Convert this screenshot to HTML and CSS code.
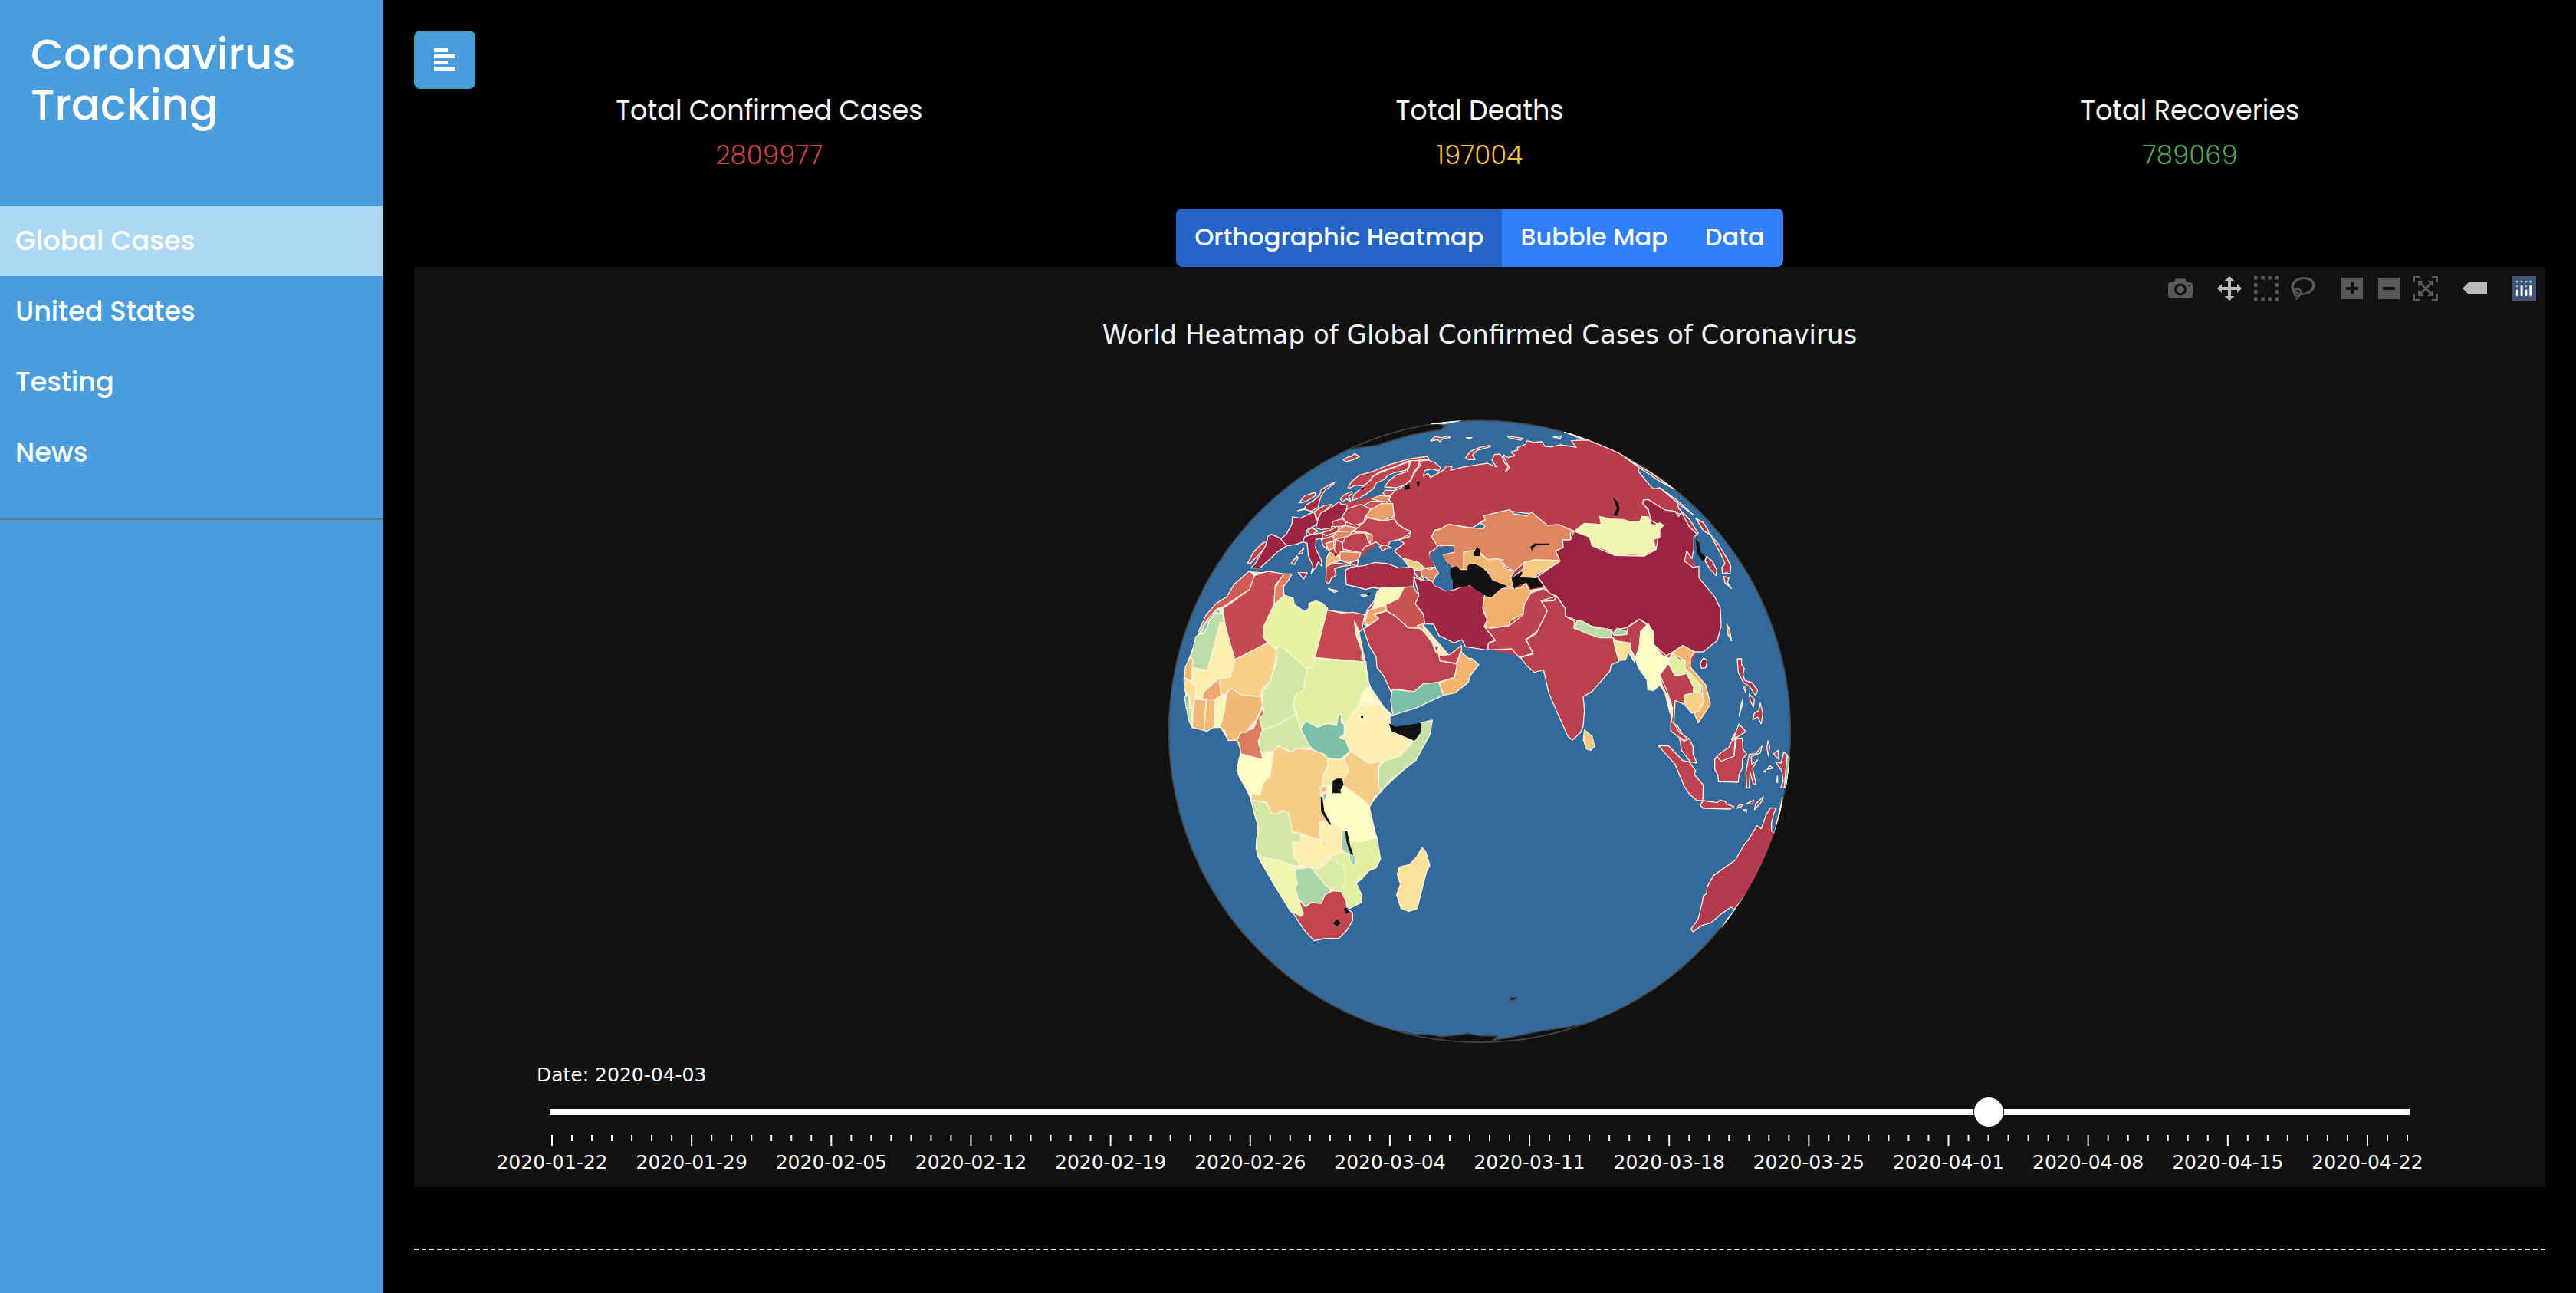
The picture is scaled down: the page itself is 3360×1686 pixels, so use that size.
FILE: index.html
```html
<!DOCTYPE html>
<html lang="en">
<head>
<meta charset="utf-8">
<title>Coronavirus Tracking</title>
<link rel="stylesheet" href="styles.css">
</head>
<body>
<aside class="sidebar">
  <h1 class="brand">Coronavirus Tracking</h1>
  <nav class="nav">
    <a class="nav-link active" href="#global">Global Cases</a>
    <a class="nav-link" href="#us">United States</a>
    <a class="nav-link" href="#testing">Testing</a>
    <a class="nav-link" href="#news">News</a>
  </nav>
</aside>
<main class="content">
  <button class="toggle" type="button" aria-label="Toggle sidebar">
    <svg width="28" height="30" viewBox="0 0 28 30"><path fill="#fff" d="M1 0h16q1 0 1 1v3q0 1-1 1H1q-1 0-1-1V1q0-1 1-1zM1 8h26q1 0 1 1v3q0 1-1 1H1q-1 0-1-1V9q0-1 1-1zM1 16h16q1 0 1 1v3q0 1-1 1H1q-1 0-1-1v-3q0-1 1-1zM1 24h26q1 0 1 1v3q0 1-1 1H1q-1 0-1-1v-3q0-1 1-1z"/></svg>
  </button>
  <section class="totals">
    <div class="total"><h2>Total Confirmed Cases</h2><p class="confirmed">2809977</p></div>
    <div class="total"><h2>Total Deaths</h2><p class="deaths">197004</p></div>
    <div class="total"><h2>Total Recoveries</h2><p class="recovered">789069</p></div>
  </section>
  <div class="tabs">
    <button class="tab active" type="button">Orthographic Heatmap</button>
    <button class="tab" type="button">Bubble Map</button>
    <button class="tab" type="button">Data</button>
  </div>
  <section class="chart">
    <div class="modebar">
      <div class="mode-group">
        <button type="button" aria-label="Download plot"><svg viewBox="0 0 1000 1000"><path transform="matrix(1 0 0 -1 0 850)" d="m500 450c-83 0-150-67-150-150 0-83 67-150 150-150 83 0 150 67 150 150 0 83-67 150-150 150z m400 150h-120c-16 0-34 13-39 29l-31 93c-6 15-23 28-40 28h-340c-16 0-34-13-39-28l-31-94c-6-15-23-28-40-28h-120c-55 0-100-45-100-100v-450c0-55 45-100 100-100h800c55 0 100 45 100 100v450c0 55-45 100-100 100z m-400-550c-138 0-250 112-250 250 0 138 112 250 250 250 138 0 250-112 250-250 0-138-112-250-250-250z m365 380c-19 0-35 16-35 35 0 19 16 35 35 35 19 0 35-16 35-35 0-19-16-35-35-35z"/></svg></button>
      </div>
      <div class="mode-group">
        <button class="on" type="button" aria-label="Pan"><svg viewBox="0 0 1000 1000"><path transform="matrix(1 0 0 -1 0 850)" d="m1000 350l-187 188 0-125-250 0 0 250 125 0-188 187-187-187 125 0 0-250-250 0 0 125-188-188 186-187 0 125 252 0 0-250-125 0 187-188 188 188-125 0 0 250 250 0 0-126 187 188z"/></svg></button>
        <button type="button" aria-label="Box select"><svg viewBox="0 0 1000 1000"><path d="M0 0h143v143H0zM286 0h143v143H286zM571 0h143v143H571zM857 0h143v143H857zM0 286h143v143H0zM857 286h143v143H857zM0 571h143v143H0zM857 571h143v143H857zM0 857h143v143H0zM286 857h143v143H286zM571 857h143v143H571zM857 857h143v143H857z"/></svg></button>
        <button type="button" aria-label="Lasso select"><svg viewBox="0 0 1031 1000"><path transform="matrix(1 0 0 -1 0 850)" d="m1018 538c-36 207-290 336-568 286-277-48-473-256-436-463 10-57 36-108 76-151-13-66 11-137 68-183 34-28 75-41 114-42l-55-70 0 0c-2-1-3-2-4-3-10-14-8-34 5-45 14-11 34-8 45 4 1 1 2 3 2 5l0 0 113 140c16 11 31 24 45 40 4 3 6 7 8 11 48-3 100 0 151 9 278 48 473 255 436 462z m-624-379c-80 14-149 48-197 96 42 42 109 47 156 9 33-26 47-66 41-105z m-187-74c-19 16-33 37-39 60 50-32 109-55 174-68-42-25-95-24-135 8z m360 75c-34-7-69-9-102-8 8 62-16 128-68 170-73 59-175 54-244-5-9 20-16 40-20 61-28 159 121 317 333 354s407-60 434-217c28-159-121-318-333-355z"/></svg></button>
      </div>
      <div class="mode-group">
        <button type="button" aria-label="Zoom in"><svg viewBox="0 0 875 1000"><path transform="matrix(1 0 0 -1 0 850)" d="m1 787l0-875 875 0 0 875-875 0z m687-500l-187 0 0-187-125 0 0 187-188 0 0 125 188 0 0 187 125 0 0-187 187 0 0-125z"/></svg></button>
        <button type="button" aria-label="Zoom out"><svg viewBox="0 0 875 1000"><path transform="matrix(1 0 0 -1 0 850)" d="m0 788l0-876 876 0 0 876-876 0z m688-500l-500 0 0 125 500 0 0-125z"/></svg></button>
        <button type="button" aria-label="Reset"><svg viewBox="0 0 1000 1000"><path transform="matrix(1 0 0 -1 0 850)" d="m250 850l-187 0-63 0 0-62 0-188 63 0 0 188 187 0 0 62z m688 0l-188 0 0-62 188 0 0-188 62 0 0 188 0 62-62 0z m-875-938l0 188-63 0 0-188 0-62 63 0 187 0 0 62-187 0z m875 188l0-188-188 0 0-62 188 0 62 0 0 62 0 188-62 0z m-125 188l-1 0-93-94-156 156 156 156 92-93 2 0 0 250-250 0 0-2 93-92-156-156-156 156 94 92 0 2-250 0 0-250 0 0 93 93 157-156-157-156-93 94 0 0 0-250 250 0 0 0-94 93 156 157 156-157-93-93 0 0 250 0 0 250z"/></svg></button>
      </div>
      <div class="mode-group">
        <button class="on" type="button" aria-label="Toggle hover labels"><svg viewBox="0 0 1500 1000"><path transform="matrix(1 0 0 -1 0 850)" d="m375 725l0 0-375-375 375-374 0-1 1125 0 0 750-1125 0z"/></svg></button>
      </div>
      <div class="mode-group">
        <a href="#plotly" aria-label="Produced with Plotly"><svg viewBox="0 0 132 132"><rect width="132" height="132" rx="6" fill="#435375"/><g fill="#80cfbe"><circle cx="78" cy="54" r="6"/><circle cx="102" cy="30" r="6"/><circle cx="78" cy="30" r="6"/><circle cx="54" cy="30" r="6"/><circle cx="30" cy="30" r="6"/><circle cx="30" cy="54" r="6"/></g><path fill="none" stroke="#fff" stroke-width="12" stroke-linecap="round" d="M30 78v24M54 54v48M78 78v24M102 54v48"/></svg></a>
      </div>
    </div>
    <h3 class="chart-title">World Heatmap of Global Confirmed Cases of Coronavirus</h3>
    <svg class="globe" viewBox="0 0 2520 2520" role="img" aria-label="Globe coloured by confirmed cases">
      <defs><clipPath id="disc"><circle cx="1260" cy="1271" r="1219"/></clipPath></defs>
      <circle cx="1260" cy="1271" r="1217" fill="#346a9b"/>
      <g clip-path="url(#disc)">
      <!-- polar land without data -->
      <g class="nodata">
        <path d="M730 174L850 115 980 75 1080 60 1125 78 1105 92 1060 98 990 112 900 138 860 152 780 162z"/>
        <path d="M940 2442L1010 2458 1060 2456 1110 2465 1180 2458 1215 2452 1250 2460 1265 2462 1330 2462 1315 2478 1380 2468 1490 2445 1600 2428 1670 2415 1600 2470 1260 2500 1000 2500z"/>
        <path d="M1380 2312L1405 2312 1398 2322 1380 2322z"/>
      </g>
      <circle class="rim" cx="1260" cy="1271" r="1217"/>
      <!-- cream base under the continents, seen only along the borders -->
      <g class="base">
        <path d="M160 885L270 745 360 645 495 655 460 775 495 740 575 803 660 795 805 812 790 882 815 1000 830 1090 910 1210 915 1270 1030 1275 1010 1380 875 1505 830 1565 858 1685 870 1770 800 1850 775 1870 798 1925 740 1965 763 1990 710 2080 612 2088 525 1975 392 1760 390 1640 365 1540 312 1425 325 1355 310 1305 275 1305 245 1258 140 1258 108 1130 108 1020z"/>
        <path d="M1000 640L1070 520 1230 475 1630 480 1900 420 2050 480 2095 600 2180 800 2130 900 2085 1020 2150 1170 2115 1225 2070 1140 2000 1160 1950 1060 1870 950 1780 900 1620 930 1560 900 1460 985 1290 950 1290 680 1170 640 1120 570 1090 560z" fill="#ba3f4f"/>
        <path d="M640 500L720 380 900 340 950 470 830 560 780 600 720 600 660 560z" fill="#bf4251"/>
        <path d="M858 720L1000 700 1045 860 1170 1005 1100 1080 935 1105 810 870z"/>
      </g>
      <g class="land">
      <!-- Russia -->
      <path fill="#b83c4e" d="M1060 210L1085 220 1108 240 1100 252 1075 245 1045 250 1040 272 1058 262 1068 278 1085 268 1120 248 1130 232 1152 236 1146 250 1190 238 1225 232 1265 226 1290 222 1325 236 1308 210 1318 188 1338 186 1350 200 1358 222 1372 235 1360 256 1378 240 1360 210 1352 188 1370 200 1398 192 1382 178 1410 170 1408 160 1440 148 1445 134 1470 140 1505 138 1515 156 1540 158 1575 150 1620 156 1638 160 1630 148 1618 134 1660 132 1685 132 1750 158 1810 185 1870 225 1885 240 1880 252 1910 290 1940 323 1965 318 2030 370 2040 400 2080 440 2115 495 2112 502 2080 470 2045 420 1985 410 1900 380 1930 420 1930 445 1820 470 1735 480 1630 488 1525 470 1463 420 1378 410 1275 445 1232 475 1140 462 1105 480 1085 484 1072 510 1095 545 1090 556 1065 570 1062 580 1075 600 1088 628 1045 632 1020 612 975 600 955 592 925 565 950 548 965 535 945 522 965 515 985 510 990 490 965 478 935 455 928 440 925 430 920 390 912 378 905 360 915 345 928 328 945 322 990 290 1005 260 1028 230 1022 215 1040 212z"/>
      <!-- Arctic islands and northern Europe -->
      <g fill="#bf4251">
        <path d="M1072 68L1120 62 1182 56 1130 66z"/><path d="M1068 135L1085 118 1110 122 1140 116 1145 122 1115 127 1105 138 1095 130z"/><path d="M1208 122L1230 122 1220 127z"/>
        <path d="M1205 200L1225 175 1260 160 1300 152 1302 157 1250 172 1232 190 1242 208 1215 207z"/>
        <path d="M726 208L745 198 760 195 770 184 790 196 765 208 738 216z"/>
        <path d="M745 318L758 295 790 268 840 255 900 230 985 205 1055 195 1062 208 1030 208 1000 215 985 212 930 235 870 255 840 275 825 300 800 310 775 308 755 318z"/>
        <path d="M760 368L768 345 790 325 810 308 830 292 845 272 880 255 935 235 985 215 980 240 970 250 930 258 900 270 888 285 855 300 845 320 820 340 790 358z"/>
        <path d="M888 315L905 290 935 268 975 255 985 235 990 212 1025 212 1020 235 1003 255 992 285 970 305 935 318z"/>
        <path d="M715 362L730 345 760 332 762 340 748 350 755 370 738 362 725 372z"/>
        <path d="M553 377L575 350 615 336 618 348 590 366 565 376z"/>
        <path d="M722 430L742 400 795 383 832 395 830 410 812 432 805 455 770 465 735 450z"/>
        <path d="M882 340L890 328 928 328 915 345 895 352z"/>
        <path d="M680 450L710 432 738 450 735 465 705 472 680 468z"/><path d="M582 485L605 475 628 488 600 502z"/><path d="M612 412L650 388 682 383 655 408 625 440z"/>
        <path d="M765 490L805 455 820 435 880 448 925 440 940 462 965 478 990 488 975 505 945 520 910 528 900 548 875 545 855 530 830 540 840 505 815 492z"/><path d="M868 548L890 542 915 552 895 555 880 565z"/>
        <path d="M722 540L735 510 775 495 815 495 825 530 835 540 812 548 800 565 775 568 725 558z"/>
        <path d="M692 560L695 520 720 530 728 565 712 585 700 575z"/><path d="M640 520L690 505 690 525 660 535 662 560 648 545z"/>
        <path d="M660 622L700 612 740 618 750 608 755 622 720 625 692 635 698 660 680 672 670 695 658 685z"/><path d="M668 712L705 722 690 727z"/>
        <path d="M353 612L375 570 410 535 428 528 422 550 395 580 362 615z"/><path d="M522 615L545 585 550 592 535 618z"/><path d="M550 578L572 553 565 575z"/>
        <path d="M1000 640L1030 640 1040 680 1015 665z"/>
      </g>
      <g fill="#9c2444">
        <path fill="#a92c49" d="M548 408L575 400 582 385 610 368 635 345 640 325 692 296 688 304 655 328 640 350 632 375 628 395 600 410 575 402z"/>
        <path d="M478 522L505 498 525 460 528 432 560 437 590 422 612 412 620 440 630 455 608 470 582 485 582 508 568 530 540 540 505 545z"/>
        <path d="M365 632L385 610 395 590 420 550 430 520 428 510 445 500 478 515 505 545 470 568 430 605 400 632z"/>
        <path d="M568 530L575 510 605 500 645 495 645 515 620 520 618 555 640 600 643 625 628 608 622 625 605 645 600 655 608 625 590 585 585 535z"/><path d="M550 650L585 650 572 675z"/>
        <path d="M620 475L628 440 640 415 680 395 710 372 718 382 742 385 738 405 722 430 720 440 685 450 680 475 640 482z"/>
        <path fill="#b33a4d" d="M640 495L680 482 702 468 715 478 700 492 660 505z"/>
        <path d="M750 612L785 600 780 625z"/>
      </g>
      <g fill="#df8663">
        <path d="M838 362L870 348 912 352 900 375 870 370z"/><path fill="#c95252" d="M805 388L835 370 880 372 870 392 835 400z"/>
        <path fill="#eba069" d="M815 432L832 405 875 380 920 380 925 430 880 447z"/>
        <path d="M705 482L735 466 780 475 760 488 715 490z"/><path d="M685 510L700 490 765 488 745 508 700 518z"/><path d="M658 535L688 528 690 555 668 562z"/>
        <path d="M815 495L838 500 840 525 825 530z"/><path d="M712 600L715 568 795 572 785 600 745 612z"/>
        <path fill="#f3b571" d="M658 628L660 595 672 570 690 580 712 588 710 605 680 612z"/>
        <path fill="#f8cb82" d="M958 593L1020 610 1048 635 1035 642 985 630z"/><path d="M1030 640L1045 632 1068 638 1085 628 1103 655 1090 660 1075 690 1050 670 1035 665z"/>
        <path d="M795 738L825 736 808 745z"/>
      </g>
      <!-- Middle East -->
      <path fill="#a92c49" d="M735 640L760 628 810 622 850 610 900 615 945 632 1000 628 1005 650 1000 710 900 708 865 712 840 708 815 716 775 705 738 697z"/>
      <path fill="#9f2745" d="M1003 668L1040 682 1070 680 1085 700 1130 722 1165 715 1210 697 1250 712 1280 735 1275 800 1290 835 1278 860 1322 915 1295 925 1290 953 1205 940 1190 912 1160 925 1100 895 1080 852 1045 850 1040 812 1005 770 1022 735z"/>
      <path fill="#c95252" d="M958 708L1000 705 1022 740 1008 772 1040 815 1045 850 1030 868 980 866 925 818 895 800 893 775 940 752z"/>
      <path fill="#f5f9b4" d="M855 745L870 712 965 706 942 752 850 795 838 780z"/>
      <path fill="#f0a56b" d="M810 852L822 800 890 778 893 800 845 812 865 830 830 855z"/><path fill="#bf4251" d="M808 840L820 795 855 752 840 790 822 800z"/>
      <path fill="#bf4251" d="M805 870L830 855 865 830 850 815 895 800 930 820 980 866 1025 868 1045 885 1075 925 1085 955 1100 970 1105 995 1165 1006 1175 1015 1160 1060 1100 1078 1035 1088 1005 1118 935 1105 915 1120 885 1055 858 1020 855 980 830 940z"/>
      <path fill="#f0a56b" d="M1015 858L1038 850 1042 880 1028 868z"/><path fill="#bf4251" d="M1100 975L1145 970 1188 935 1190 955 1168 1005 1105 995zM1088 960L1084 942 1095 932 1100 945z"/>
      <path fill="#f3b470" d="M1172 1005L1185 958 1215 985 1228 985 1257 1010 1225 1050 1215 1080 1165 1120 1118 1130 1102 1080 1162 1060z"/>
      <path fill="#7dc0a9" d="M918 1108L1003 1115 1040 1085 1100 1080 1118 1130 1010 1180 960 1195 920 1208 912 1150z"/>
      <!-- Africa -->
      <path fill="#c74a53" d="M660 795L720 808 765 805 810 815 800 870 790 882 770 840 775 890 800 960 798 985 815 1000 615 982 640 880z"/>
      <path fill="#e8f3a2" d="M455 780L495 738 530 750 535 775 575 803 592 790 592 770 620 760 645 770 665 790 655 830 615 985 605 1022 583 1022 480 935 450 945 430 925 412 900 415 860z"/>
      <path fill="#de8161" d="M458 775L455 720 490 655 525 655 512 680 492 705 495 738z"/>
      <path fill="#c54952" d="M255 790L300 760 360 715 378 662 430 645 495 655 460 700 455 775 415 860 412 900 430 925 302 990 270 890z"/>
      <path fill="#cf5a56" d="M160 880L190 815 230 770 270 745 300 695 360 643 378 662 360 715 300 755 255 785 235 790 205 820z"/>
      <path fill="#badea8" d="M128 985L150 900 165 890 180 890 205 835 225 810 245 812 250 790 260 845 245 845 195 1032 138 1025z"/>
      <path fill="#7dc0a9" d="M222 800L245 793 240 812zM170 888L185 850 205 830 195 860 180 885z"/>
      <path fill="#fcefb0" d="M195 1032L245 845 262 848 302 990 308 1000 285 1060 235 1065 215 1080 180 1120 175 1145 140 1140 135 1095 132 1050 138 1022z"/>
      <path fill="#f6d089" d="M302 990L430 925 465 950 460 1000 440 1075 408 1110 405 1135 330 1130 290 1103 265 1128 245 1122 240 1065 285 1060z"/>
      <path fill="#d1e8a5" d="M465 945L480 935 583 1025 572 1110 540 1130 530 1170 545 1210 520 1215 470 1245 412 1265 398 1215 415 1190 408 1115 440 1075 465 1000z"/>
      <path fill="#e1efa3" d="M615 985L815 1000 820 1065 830 1090 800 1120 790 1165 755 1210 735 1250 715 1205 700 1245 665 1240 625 1255 580 1230 560 1258 545 1240 545 1200 530 1170 540 1125 572 1110 583 1025 603 1022z"/>
      <path fill="#fff1b3" d="M790 1165L870 1165 915 1210 888 1225 912 1235 908 1250 915 1270 1005 1308 945 1370 880 1395 825 1390 760 1350 730 1300 735 1250 755 1205z"/>
      <path fill="#fffec4" d="M830 1090L848 1140 918 1208 905 1205 870 1165 820 1160 790 1165 800 1120z"/>
      <path fill="#c5e3a6" d="M1030 1238L1075 1227 1065 1285 1010 1385 950 1430 905 1465 875 1505 865 1490 865 1410 890 1385 945 1370 1005 1308 1030 1275z"/>
      <path fill="#d1e8a5" d="M410 1265L395 1300 400 1355 455 1350 475 1330 520 1352 605 1338 560 1262 540 1205 510 1220 470 1245z"/>
      <path fill="#7dc0a9" d="M580 1230L625 1255 665 1240 700 1248 708 1205 720 1205 718 1235 730 1245 730 1280 712 1295 735 1305 752 1350 715 1380 665 1375 650 1358 615 1358 590 1320 560 1262z"/>
      <path fill="#dc7d5f" d="M310 1305L325 1275 375 1260 400 1200 410 1180 415 1205 398 1220 410 1265 393 1310 412 1382 325 1358 322 1325z"/>
      <path fill="#f3b776" d="M245 1255L250 1190 275 1115 290 1103 330 1130 405 1135 410 1170 385 1225 345 1275 325 1275 310 1305 275 1307 262 1265z"/>
      <path fill="#f5f9b4" d="M220 1255L235 1145 268 1130 262 1190 245 1255z"/>
      <path fill="#f3b776" d="M182 1265L190 1145 222 1140 220 1255 190 1272z"/><path fill="#f3b776" d="M136 1255L140 1145 190 1150 182 1268z"/>
      <path fill="#efa76d" d="M175 1145L180 1118 240 1062 248 1130 225 1145z"/><path fill="#f3b776" d="M105 1060L108 1020 125 985 138 985 132 1075z"/>
      <path fill="#f9dc94" d="M105 1110L103 1062 132 1080 150 1100 145 1150 140 1190 120 1130z"/><path fill="#85c8aa" d="M105 1135L122 1130 125 1180 112 1180z"/><path fill="#c5e3a6" d="M113 1180L130 1175 137 1258 122 1230z"/>
      <g transform="translate(0 1230)">
        <path fill="#fffdc4" d="M318 150L325 130 412 152 425 120 455 125 440 215 415 245 400 290 360 290 320 220 310 195z"/>
        <path fill="#f6cc86" d="M365 310L370 285 400 290 415 240 440 215 455 115 472 98 520 122 550 108 605 112 650 130 665 150 665 180 648 210 645 240 640 280 640 320 665 390 633 395 635 460 660 480 655 492 615 460 560 440 527 435 512 360 490 350 470 364 445 362 425 318z"/>
        <path fill="#fbe8a6" d="M665 150L730 148 747 195 725 230 690 230 680 250 645 252 650 205 668 180z"/>
        <path fill="#f6cc86" d="M730 148L755 120 825 165 875 160 862 180 865 260 878 275 850 295 830 335 800 305 730 255 725 230 747 195z"/>
        <path fill="#fffec4" d="M665 252L730 255 800 305 830 335 825 370 835 380 838 420 858 455 790 475 740 465 720 425 680 405 645 320 665 300z"/>
        <path fill="#f3b776" d="M637 258L662 255 660 278 640 280z"/><path fill="#95ceab" d="M645 288L660 278 662 300 648 314z"/>
        <path fill="#d1e8a5" d="M365 310L425 318 445 362 470 364 490 350 512 360 527 435 560 440 558 475 528 475 535 535 562 565 530 565 485 548 395 530 385 500 387 460 398 425 380 370z"/>
        <path fill="#fcefb0" d="M528 475L558 475 562 445 635 465 655 492 660 480 635 460 633 397 690 402 725 430 720 515 675 525 630 580 562 565 535 535z"/>
        <path fill="#e1efa3" d="M755 468L790 475 858 455 872 540 855 575 815 590 775 630 798 680 798 710 750 735 735 700 718 668 735 625 728 570 675 540 680 525 725 515 750 525z"/>
        <path fill="#9dd2aa" d="M722 428L735 430 745 490 778 540 768 570 752 545 750 522 720 505z"/>
        <path fill="#d8eba5" d="M600 575L630 580 680 540 728 565 735 630 718 668 690 665 660 645z"/>
        <path fill="#aad6aa" d="M535 575L600 575 660 645 680 662 640 715 600 710 578 728 550 695 535 650 545 635z"/>
        <path fill="#eff7ae" d="M392 530L485 548 530 568 600 572 535 580 547 640 537 650 570 760 550 765 520 745 455 640z"/>
        <path fill="#c34551" d="M525 745L560 765 570 755 552 697 578 728 602 710 640 715 655 680 685 665 718 668 738 705 740 735 763 750 763 780 740 820 710 850 650 852 612 860 575 820z"/>
        <path fill="#fae29b" d="M945 572L985 562 1015 530 1035 495 1050 515 1065 565 1052 590 1015 735 982 745 952 733 935 680 950 640 938 600z"/>
      </g>
      <!-- Asia -->
      <g transform="translate(1230 0)">
        <path fill="#df8663" d="M-135 545L-158 510 -145 484 -125 480 -90 460 -30 472 45 478 50 465 32 458 52 442 45 428 108 412 148 404 165 420 215 428 233 413 295 465 340 462 400 488 385 495 385 522 355 522 357 552 327 565 345 605 245 600 205 610 165 645 125 620 120 600 60 598 30 570 -30 572 -33 640 -85 625 -110 595 -115 580 -70 570 -72 545z"/>
        <path fill="#f3b776" d="M-33 640L-33 570 10 562 30 575 60 598 105 596 125 620 130 635 165 645 150 670 170 690 165 712 125 700 85 690 60 645 10 615 -15 640z"/>
        <path fill="#f8cb82" d="M165 665L200 635 205 610 245 600 345 602 340 612 300 635 255 655 250 670 185 668z"/>
        <path fill="#f3b06e" d="M48 745L75 748 110 712 190 710 210 690 225 720 285 710 230 725 228 750 205 775 200 810 148 840 145 858 70 868 48 860 60 835 42 790z"/>
        <path fill="#bc4151" d="M48 860L70 868 145 858 200 815 205 775 230 730 280 712 330 742 270 760 300 800 275 865 210 912 240 965 185 982 155 948 62 952 65 925 92 915z"/>
        <path fill="#ba3f4f" d="M190 982L240 968 212 912 250 890 295 800 272 762 320 760 332 742 365 790 365 820 400 840 400 868 545 905 545 875 555 895 605 892 610 865 655 832 685 855 660 880 655 940 640 985 615 940 570 925 552 905 575 998 545 1010 540 1035 470 1115 435 1135 440 1190 435 1250 425 1275 393 1305 375 1290 335 1200 300 1120 280 1030 245 1040 215 1015z"/>
        <path fill="#9b2443" d="M400 488L460 510 470 545 560 583 675 585 720 560 735 480 735 465 700 445 690 402 668 380 670 366 690 364 755 405 795 410 808 430 820 415 850 470 882 500 868 510 868 560 860 595 840 565 832 605 865 630 888 625 888 670 950 745 972 790 975 860 960 915 905 960 870 960 825 935 780 965 760 975 710 930 710 880 685 850 655 832 605 865 555 875 470 860 365 820 365 790 332 742 305 732 280 700 258 665 300 635 345 605 327 565 357 552 355 522 385 522z"/>
        <path fill="#eff7ae" d="M400 488L440 457 505 462 500 430 540 440 590 442 625 452 658 448 665 430 690 432 700 462 715 465 735 455 750 465 735 480 735 512 710 520 720 560 690 570 675 585 630 578 560 583 525 560 470 545 460 510z"/>
        <path fill="#badea8" d="M398 866L415 835 435 842 470 862 545 880 545 905 500 905 450 888z"/><path fill="#a5d5a9" d="M555 885L570 867 605 880 605 892 565 895z"/>
        <path fill="#fae29b" d="M552 905L568 918 620 925 618 945 638 985 636 1000 612 962 600 992 575 993 560 945z"/>
        <path fill="#f3b470" d="M780 965L825 935 872 960 855 985 855 1020 915 1090 933 1165 885 1238 870 1200 905 1160 900 1095 830 1020 835 995z"/>
        <path fill="#e1efa3" d="M768 1005L780 965 810 990 835 995 830 1025 870 1060 897 1095 895 1122 870 1115 845 1050 795 1055z"/>
        <path fill="#bc4151" d="M735 1050L755 1015 770 1008 795 1055 840 1045 868 1100 865 1120 830 1130 830 1165 795 1150 790 1240 805 1250 830 1295 810 1290 778 1262 785 1180 762 1110z"/>
        <path fill="#fffec4" d="M640 985L655 940 660 880 690 850 712 890 710 930 745 975 775 985 765 1010 735 1050 745 1095 780 1160 785 1215 775 1200 755 1120 735 1090 710 1112 688 1108 685 1070 650 1020z"/>
        <path fill="#f6d089" d="M830 1130L895 1115 908 1150 890 1190 860 1200 835 1170z"/>
        <path fill="#9b2443" d="M893 1005L905 985 920 992 915 1022 898 1024z"/><path fill="#eba069" d="M997 852L1008 872 1016 917 1000 890z"/>
        <g fill="#b33a4d">
          <path d="M912 605L918 586 940 605 958 640 955 662 930 635z"/>
          <path d="M875 437L905 455 922 480 928 500 905 485zM932 500L965 540 1000 598 1013 625 1010 655 995 650 980 655 978 630 990 615 975 580zM985 665L1005 670 1000 690 1015 712 990 690z"/>
          <path d="M1038 987L1055 987 1055 1010 1065 1025 1060 1050 1068 1072 1095 1080 1118 1110 1110 1130 1085 1095 1062 1080 1042 1040zM1085 1125L1105 1145 1102 1175 1088 1150zM1128 1160L1138 1200 1132 1242 1118 1215 1098 1225 1105 1200 1122 1190zM1060 1145L1056 1175 1045 1210 1052 1170zM1062 1095L1072 1100 1070 1118z"/>
          <path d="M600 200L700 260 792 324 730 290 655 240zM735 318L800 365 868 425 820 390z"/>
          <path d="M137 115L200 125 190 132 145 122zM318 120L350 115 345 125zM362 100L380 104 450 130 410 120z"/>
        </g>
        <path fill="#f8c580" d="M440 1265L470 1290 480 1330 465 1345 448 1340 436 1305z"/>
      </g>
      <!-- South-east Asia and Australia -->
      <g transform="translate(1230 1230)" fill="#bf4251">
        <path d="M778 40L778 0 790 10 812 45 840 65 838 78 812 65z"/><path d="M812 65L830 80 848 68 865 100 865 128 880 165 855 160 820 115z"/>
        <path d="M730 98L770 98 825 155 850 160 875 195 870 210 905 250 903 312 880 312 850 285 830 255 795 170z"/>
        <path d="M892 330L905 312 960 320 970 310 992 315 995 325 1025 335 1010 345 905 342z"/>
        <path d="M950 150L960 138 975 158 1025 138 1035 68 1058 68 1060 110 1075 130 1058 150 1058 185 1045 210 1042 240 965 238 962 210 950 190z"/>
        <path d="M958 138L975 158 1025 138 1030 68 1072 42 1045 12 1028 55 1005 105 980 120z"/><path fill="#f8c580" d="M1015 72L1028 50 1030 75z"/>
        <path d="M1075 262L1072 200 1085 130 1110 128 1135 98 1128 125 1092 140 1095 170 1118 152 1098 185 1112 250 1100 245 1088 200 1085 262z"/>
        <path d="M1158 78L1165 100 1160 138 1154 105zM1155 190L1165 175 1178 185zM1142 197l8-5 0 10zM1180 130L1198 115 1200 150zM1195 215l2 25 -5 0z"/>
        <path d="M1188 160L1210 165 1220 122 1235 135 1228 260 1208 262 1218 235 1212 195z"/><path fill="#7dc0a9" d="M1233 135L1242 145 1230 262 1222 260z"/>
        <path d="M1038 342L1045 330 1062 326 1055 335zM1062 348L1075 348 1074 357zM1072 325L1102 310 1098 325zM1105 348L1110 325 1140 296 1132 318z"/>
        <path fill="#b33a4d" d="M1168 340L1190 342 1180 365 1172 400 1172 430 1183 440 1215 300 1195 420 1160 520 1100 640 1025 740 1015 728 975 755 935 790 900 800 865 825 857 815 885 775 900 715 905 685 918 675 920 650 945 605 1030 545 1065 485 1085 460 1115 410 1132 422 1150 370z"/>
        <path fill="#eff7ae" d="M978 808L1000 775 1030 735 1010 770z"/>
      </g>
      </g>
      <!-- inland seas -->
      <path fill="#346a9b" d="M1062 580L1095 552 1130 545 1160 548 1158 568 1115 580 1128 605 1150 625 1142 650 1160 715 1130 722 1085 700 1078 688 1103 655 1075 605z"/>
      <!-- lakes and countries without data -->
      <g class="nodata" stroke="none">
        <path d="M-85 630L-60 625 -45 640 -20 640 -15 620 10 615 40 630 65 655 80 680 138 702 110 715 75 748 50 738 -10 700 -75 715 -75 680 -85 660z" transform="translate(1230 0)"/>
        <path d="M1385 672L1410 655 1425 645 1428 655 1415 668 1485 672 1510 702 1460 715 1445 690 1420 695 1395 714z"/>
        <path d="M905 1240L930 1253 1030 1238 1028 1278 1005 1308 915 1270z"/>
        <path d="M2105 520L2120 535 2125 570 2145 590 2132 606 2112 575z"/>
        <path d="M1782 357L1800 372 1808 400 1798 428 1783 426 1797 400z"/><path d="M1532 536L1532 542 1480 544 1468 556 1466 566 1458 550 1475 536z"/>
        <path d="M1235 575L1250 550 1262 560 1262 585 1240 585z"/>
        <path d="M966 308L985 304 988 320 968 326zM1012 295L1026 293 1020 318zM792 320L810 315 805 323zM688 578L704 574 698 588zM815 735L835 728 825 740z"/>
        <path d="M685 1465L700 1456 722 1456 728 1478 714 1502 718 1513 684 1513z"/><path d="M638 1528L645 1528 652 1585 680 1636 672 1636 640 1585z"/><path d="M733 1660L742 1662 754 1720 766 1754 756 1752 740 1710z"/>
        <path d="M684 2022L702 2004 718 2020 702 2036z" stroke="#fdf0dd"/><path d="M728 1965L740 1960 750 1980 738 1985z"/><circle cx="800" cy="1214" r="5"/>
      </g>
      </g>
    </svg>
    <div class="timeline">
      <label class="date" for="date">Date: 2020-04-03</label>
      <input class="slider" id="date" type="range" min="0" max="93" value="72">
      <svg class="ticks" viewBox="0 0 93 14" preserveAspectRatio="none" aria-hidden="true"><path vector-effect="non-scaling-stroke" d="M0 0v14m1-14v8m1-8v8m1-8v8m1-8v8m1-8v8m1-8v8m1-8v14m1-14v8m1-8v8m1-8v8m1-8v8m1-8v8m1-8v8m1-8v14m1-14v8m1-8v8m1-8v8m1-8v8m1-8v8m1-8v8m1-8v14m1-14v8m1-8v8m1-8v8m1-8v8m1-8v8m1-8v8m1-8v14m1-14v8m1-8v8m1-8v8m1-8v8m1-8v8m1-8v8m1-8v14m1-14v8m1-8v8m1-8v8m1-8v8m1-8v8m1-8v8m1-8v14m1-14v8m1-8v8m1-8v8m1-8v8m1-8v8m1-8v8m1-8v14m1-14v8m1-8v8m1-8v8m1-8v8m1-8v8m1-8v8m1-8v14m1-14v8m1-8v8m1-8v8m1-8v8m1-8v8m1-8v8m1-8v14m1-14v8m1-8v8m1-8v8m1-8v8m1-8v8m1-8v8m1-8v14m1-14v8m1-8v8m1-8v8m1-8v8m1-8v8m1-8v8m1-8v14m1-14v8m1-8v8m1-8v8m1-8v8m1-8v8m1-8v8m1-8v14m1-14v8m1-8v8m1-8v8m1-8v8m1-8v8m1-8v8m1-8v14m1-14v8m1-8v8"/></svg>
    </div>
    <div class="labels">
      <span>2020-01-22</span><span>2020-01-29</span><span>2020-02-05</span><span>2020-02-12</span><span>2020-02-19</span><span>2020-02-26</span><span>2020-03-04</span><span>2020-03-11</span><span>2020-03-18</span><span>2020-03-25</span><span>2020-04-01</span><span>2020-04-08</span><span>2020-04-15</span><span>2020-04-22</span>
    </div>
  </section>
  <hr class="divider">
</main>
</body>
</html>
```

FILE: styles.css
```css
* { box-sizing: border-box; }
body {
  margin: 0;
  display: flex;
  min-height: 100vh;
  background: #000;
  color: #fff;
  font-family: Poppins, Inter, sans-serif;
}
h1, h2, h3, p { margin: 0; font-weight: 400; }
button { font: inherit; color: inherit; cursor: pointer; }

.sidebar { flex: 0 0 500px; background: #499ddd; }
.brand { padding: 38px 40px 98px; font-size: 56px; line-height: 66px; font-weight: 500; }
.nav { padding-bottom: 40px; border-bottom: 2px solid #5f7480; }
.nav-link {
  display: block;
  padding: 20px;
  font-size: 35px;
  line-height: 52px;
  font-weight: 500;
  color: #fff;
  text-decoration: none;
}
.nav-link.active { background: #add8f3; }

.content { flex: 1; min-width: 0; padding: 40px; }
.toggle {
  display: flex;
  align-items: center;
  justify-content: center;
  width: 80px;
  height: 76px;
  background: #499ddd;
  border: 2px solid #3fa0bd;
  border-radius: 8px;
}
.totals { display: grid; grid-template-columns: repeat(3, 1fr); text-align: center; }
.total h2 { font-size: 35px; line-height: 56px; }
.total p { font-size: 34px; line-height: 60px; font-weight: 300; }
.total .confirmed { color: #cb444a; }
.total .deaths { color: #f6c244; }
.total .recovered { color: #53a551; }

.tabs { display: flex; justify-content: center; margin-top: 40px; }
.tab {
  height: 76px;
  padding: 0 24px 2px;
  border: 0;
  background: #307ef8;
  font-size: 32px;
  font-weight: 500;
}
.tab.active { background: #2464c6; border-radius: 8px 0 0 8px; }
.tab:last-child { border-radius: 0 8px 8px 0; }

.chart { background: #111; font-family: Verdana, "DejaVu Sans", sans-serif; padding-top: 12px; }
.modebar { display: flex; justify-content: flex-end; gap: 16px; padding-right: 4px; }
.mode-group { display: flex; }
.mode-group button, .mode-group a {
  display: block;
  height: 32px;
  padding: 0 8px;
  border: 0;
  background: none;
  fill: #595959;
}
.mode-group .on { fill: #b9b9b9; }
.mode-group svg { display: block; width: 32px; height: 32px; }
.chart-title {
  margin-top: 24px;
  text-align: center;
  font-size: 34px;
  line-height: 40px;
  color: #f2f5fa;
}
.globe { display: block; width: 840px; max-width: 100%; margin: 74px auto 0; }
.base { fill: #f8ecc0; }
.land path { stroke: #fdf0dd; stroke-width: 4; stroke-linejoin: round; }
.nodata { fill: #111; }
.nodata:not([stroke]) { stroke: #444; stroke-width: 5; }
.rim { fill: none; stroke: #444; stroke-width: 6; }

.timeline { padding: 16px 160px 0; }
.date { display: block; font-size: 25px; line-height: 32px; }
.slider {
  display: block;
  appearance: none;
  width: 100%;
  height: 40px;
  margin: 12px 0 10px;
  background: linear-gradient(#fff, #fff) center / calc(100% - 34px) 8px no-repeat;
}
.slider::-webkit-slider-thumb {
  appearance: none;
  width: 40px;
  height: 40px;
  border: 1px solid #111;
  border-radius: 50%;
  background: #fff;
}
.ticks { display: block; width: calc(100% - 40px); height: 14px; margin: 0 20px; overflow: visible; }
.ticks path { fill: none; stroke: #fff; stroke-width: 2; }
.labels {
  display: grid;
  grid-template-columns: repeat(14, 1fr);
  margin: 6px 141px 0 89px;
  padding-bottom: 16px;
  text-align: center;
  font-size: 25px;
  line-height: 32px;
}
.divider { margin: 80px 0 0; border: 0; border-top: 2px dashed #e4e4e4; }
```
